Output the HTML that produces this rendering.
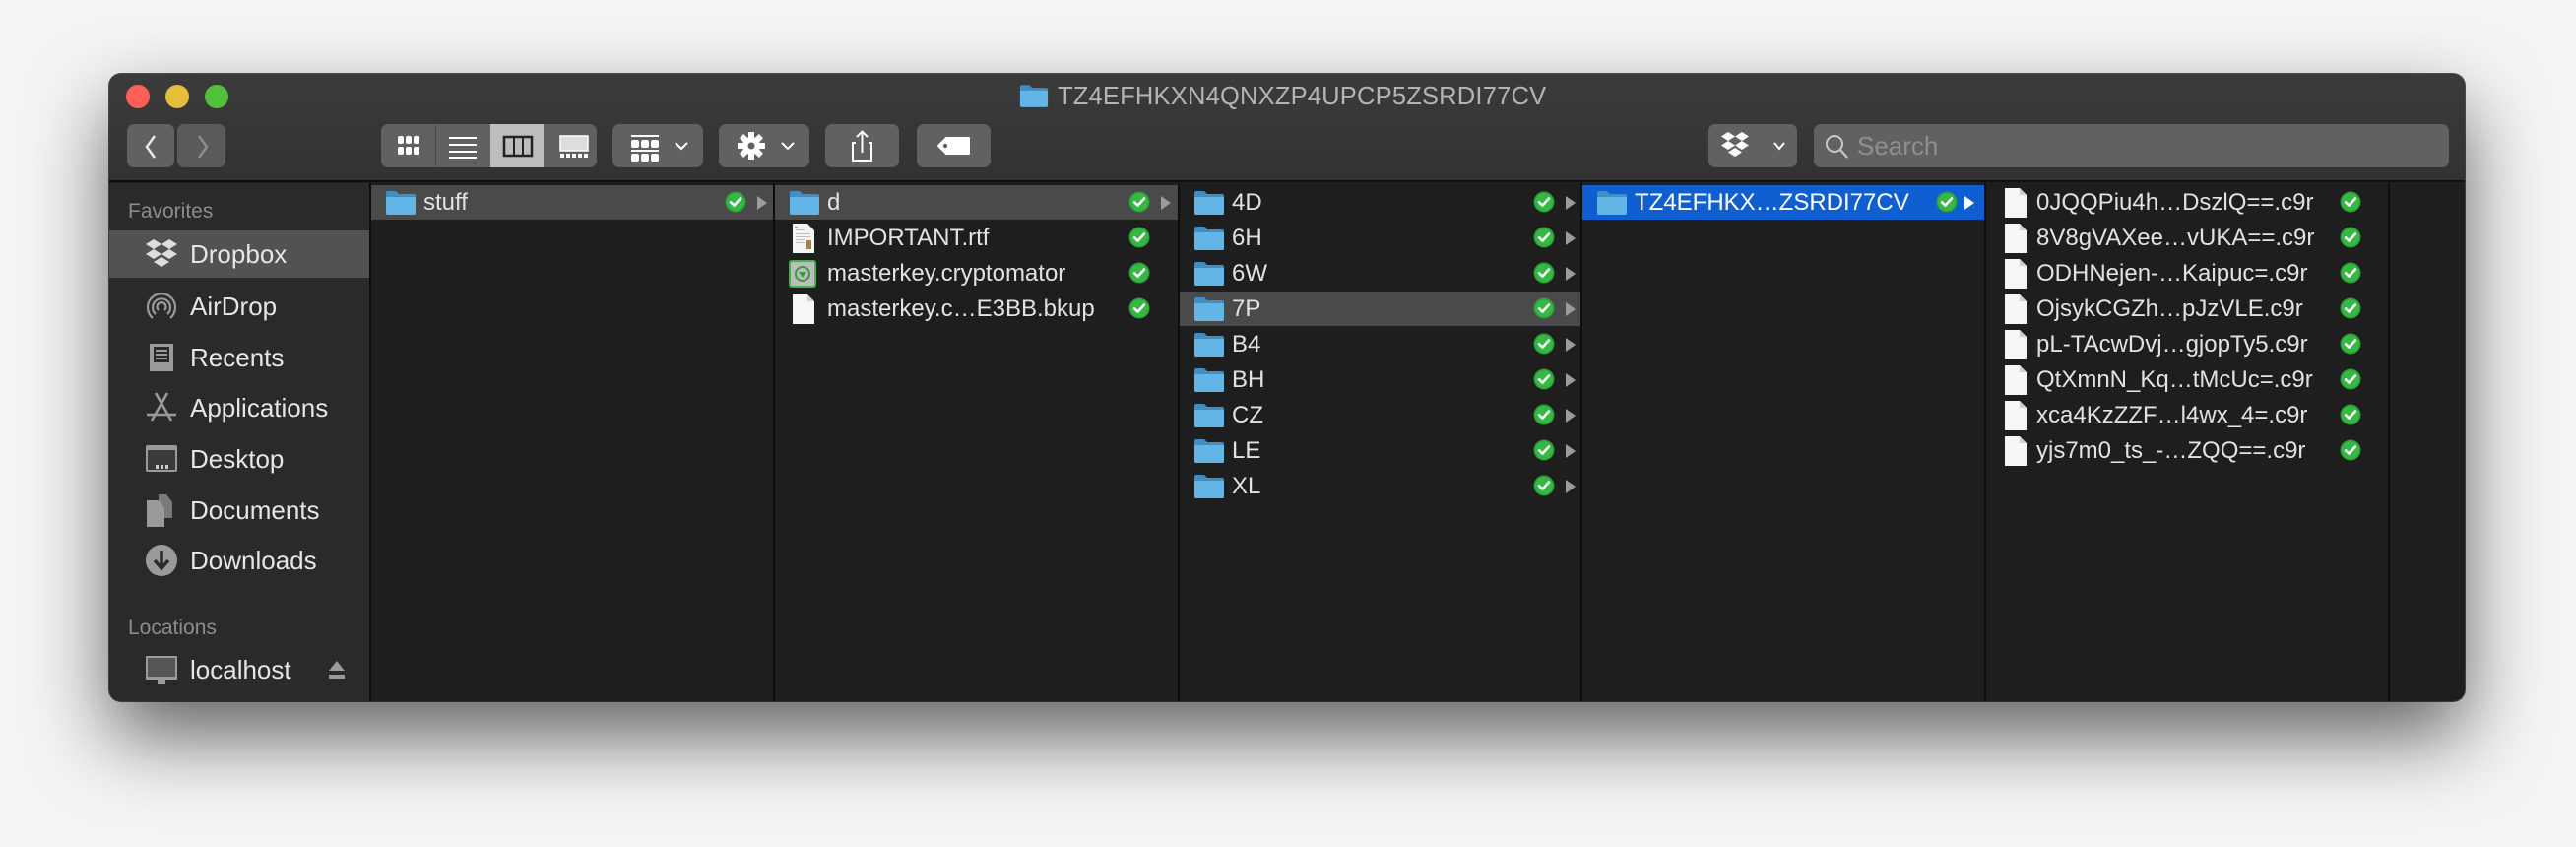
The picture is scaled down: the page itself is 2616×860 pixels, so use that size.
<!DOCTYPE html>
<html><head><meta charset="utf-8"><style>
*{margin:0;padding:0;box-sizing:border-box}
body{width:2616px;height:860px;background:#f4f4f4;position:relative;overflow:hidden;font-family:"Liberation Sans",sans-serif}
.a{position:absolute}
#win{left:111px;top:75px;width:2392px;height:637px;border-radius:12px;background:#1e1e1e;box-shadow:0 35px 80px rgba(0,0,0,.6),0 0 0 1px #555;overflow:hidden}
#tb{left:0;top:0;width:2392px;height:110px;background:linear-gradient(#3b3b3b,#323232);border-bottom:2px solid #111}
.tl{width:24px;height:24px;border-radius:50%;top:11px}
.btn{background:#616161;border-radius:7px;top:51px;height:44px}
#side{left:0;top:111px;width:266px;height:526px;background:#2a2a2a;border-right:2px solid #0d0d0d}
.sl{color:#8c8c8c;font-size:21px;left:19px}
.si{left:0;width:264px;height:48px;color:#e6e6e6;font-size:26px;line-height:48px}
.si span{position:absolute;left:82px}
.si svg{position:absolute;left:36px;top:7px}
.col{top:111px;height:526px;border-right:2px solid #0d0d0d}
.row{position:absolute;left:0;width:100%;height:35px;color:#e2e2e2;font-size:24px;line-height:35px}
.row .t{position:absolute;left:53px}
.row .ic{position:absolute;left:14px;top:5px}
.row .ck{position:absolute;left:359px;top:6px}
.row .ar{position:absolute;left:392px;top:11px}
.sel{background:#4a4a4a}
.blue{background:#0f5fd1;color:#fff}
</style></head><body>
<svg width="0" height="0" style="position:absolute">
<defs>
<symbol id="fold" viewBox="0 0 32 26"><path d="M1 3 Q1 1 3 1 H11 L14 4 H29 Q31 4 31 6 V24 Q31 25 29 25 H3 Q1 25 1 23Z" fill="#3f8fc4"/><path d="M1 7 H31 V23 Q31 25 29 25 H3 Q1 25 1 23Z" fill="#62b5e5"/></symbol>
<symbol id="chk" viewBox="0 0 20 20"><circle cx="10" cy="10" r="9.5" fill="#2aa338"/><circle cx="10" cy="10" r="8" fill="#35b944"/><path d="M5.5 10.3 L8.6 13.3 L14.5 6.8" stroke="#fff" stroke-width="2.3" fill="none" stroke-linecap="round" stroke-linejoin="round"/></symbol>
<symbol id="file" viewBox="0 0 24 30"><path d="M1 0 H16 L23 7 V30 H1Z" fill="#f6f6f6"/><path d="M16 0 V7 H23" fill="#cfcfcf"/></symbol>
</defs></svg>
<div id="win" class="a">
 <div id="tb" class="a">
  <div class="a tl" style="left:17px;background:#fe5f57"></div>
  <div class="a tl" style="left:57px;background:#e5bf3c"></div>
  <div class="a tl" style="left:97px;background:#52c03a"></div>
  <svg class="a" style="left:924px;top:10px" width="30" height="25"><use href="#fold"/></svg>
  <div class="a" style="left:963px;top:9px;font-size:25.5px;color:#b4b4b4;letter-spacing:.2px">TZ4EFHKXN4QNXZP4UPCP5ZSRDI77CV</div>
  <div class="a btn" style="left:18px;width:48px"></div>
  <div class="a btn" style="left:69px;width:49px;background:#5a5a5a"></div>
  <svg class="a" style="left:30px;top:60px" width="80" height="28"><path d="M16 3 L8 14 L16 25" stroke="#e8e8e8" stroke-width="2.5" fill="none"/><path d="M61 3 L69 14 L61 25" stroke="#8d8d8d" stroke-width="2.5" fill="none"/></svg>
  <div class="a btn" style="left:276px;width:219px"></div>
  <div class="a" style="left:331px;top:51px;width:1px;height:44px;background:#4a4a4a"></div>
  <div class="a" style="left:387px;top:51px;width:54px;height:44px;background:#bdbdbd"></div>
  <svg class="a" style="left:276px;top:51px" width="219" height="44">
   <g fill="#fff"><rect x="17" y="12" width="6" height="8" rx="2"/><rect x="25" y="12" width="6" height="8" rx="2"/><rect x="33" y="12" width="6" height="8" rx="2"/><rect x="17" y="23" width="6" height="8" rx="2"/><rect x="25" y="23" width="6" height="8" rx="2"/><rect x="33" y="23" width="6" height="8" rx="2"/>
   <rect x="69" y="13" width="28" height="2"/><rect x="69" y="20" width="28" height="2"/><rect x="69" y="27" width="28" height="2"/><rect x="69" y="33" width="28" height="2"/></g>
   <rect x="125" y="13" width="28" height="19" fill="none" stroke="#222" stroke-width="2.5"/><rect x="134" y="13" width="2" height="19" fill="#222"/><rect x="143" y="13" width="2" height="19" fill="#222"/>
   <rect x="182" y="12" width="28" height="15" fill="#ddd" stroke="#fff" stroke-width="1.5"/><g fill="#fff"><rect x="182" y="30" width="4" height="4"/><rect x="188" y="30" width="4" height="4"/><rect x="194" y="30" width="4" height="4"/><rect x="200" y="30" width="4" height="4"/><rect x="206" y="30" width="4" height="4"/></g>
  </svg>
  <div class="a btn" style="left:511px;width:92px"></div>
  <svg class="a" style="left:511px;top:51px" width="92" height="44"><g fill="#fff"><rect x="19" y="11" width="28" height="2"/><rect x="19" y="16" width="8" height="8" rx="2"/><rect x="29" y="16" width="8" height="8" rx="2"/><rect x="39" y="16" width="8" height="8" rx="2"/><rect x="19" y="26" width="28" height="2"/><rect x="19" y="30" width="8" height="8" rx="2"/><rect x="29" y="30" width="8" height="8" rx="2"/><rect x="39" y="30" width="8" height="8" rx="2"/></g><path d="M64 19 L70 25 L76 19" stroke="#fff" stroke-width="2" fill="none"/></svg>
  <div class="a btn" style="left:619px;width:92px"></div>
  <svg class="a" style="left:619px;top:51px" width="92" height="44"><g transform="translate(33,22)"><circle r="9" fill="#fff"/><g fill="#fff"><rect x="-3" y="-14" width="6" height="28"/><rect x="-3" y="-14" width="6" height="28" transform="rotate(45)"/><rect x="-3" y="-14" width="6" height="28" transform="rotate(90)"/><rect x="-3" y="-14" width="6" height="28" transform="rotate(135)"/></g><circle r="3.5" fill="#616161"/></g><path d="M64 19 L70 25 L76 19" stroke="#fff" stroke-width="2" fill="none"/></svg>
  <div class="a btn" style="left:727px;width:75px"></div>
  <svg class="a" style="left:727px;top:51px" width="75" height="44"><path d="M31 19 H28 V37 H47 V19 H44" stroke="#fff" stroke-width="2" fill="none"/><path d="M37.5 29 V8 M32 13 L37.5 7.5 L43 13" stroke="#fff" stroke-width="2" fill="none"/></svg>
  <div class="a btn" style="left:820px;width:75px"></div>
  <svg class="a" style="left:820px;top:51px" width="75" height="44"><path d="M22 22 L30 14 H53 V30 H30Z" fill="#fff" stroke="#fff" stroke-width="2" stroke-linejoin="round"/><circle cx="29" cy="22" r="2.2" fill="#616161"/></svg>
  <div class="a btn" style="left:1624px;width:90px"></div>
  <svg class="a" style="left:1624px;top:51px" width="90" height="44"><g fill="#fff" transform="translate(27,22)"><path d="M-7 -14 L0 -9.5 L-7 -5 L-14 -9.5Z"/><path d="M7 -14 L14 -9.5 L7 -5 L0 -9.5Z"/><path d="M-7 -5 L0 -0.5 L-7 4 L-14 -0.5Z"/><path d="M7 -5 L14 -0.5 L7 4 L0 -0.5Z"/><path d="M0 2 L7 6.5 L0 11 L-7 6.5Z"/></g><path d="M67 19 L72 25 L77 19" stroke="#fff" stroke-width="2" fill="none"/></svg>
  <div class="a btn" style="left:1731px;width:645px"></div>
  <svg class="a" style="left:1741px;top:60px" width="30" height="28"><circle cx="11" cy="11" r="8" stroke="#c8c8c8" stroke-width="2" fill="none"/><path d="M17 17 L24 25" stroke="#c8c8c8" stroke-width="2.2"/></svg>
  <div class="a" style="left:1775px;top:58px;font-size:26px;color:#8f8f8f">Search</div>
 </div>
 <div id="side" class="a">
  <div class="a sl" style="top:17px">Favorites</div>
  <div class="a si" style="top:48px;background:#525252"><svg width="34" height="34" viewBox="-17 -17 34 34"><g fill="#ddd"><path d="M-8 -15 L0 -10 L-8 -5 L-16 -10Z"/><path d="M8 -15 L16 -10 L8 -5 L0 -10Z"/><path d="M-8 -5 L0 0 L-8 5 L-16 0Z"/><path d="M8 -5 L16 0 L8 5 L0 0Z"/><path d="M0 3 L8 8 L0 13 L-8 8Z"/></g></svg><span>Dropbox</span></div>
  <div class="a si" style="top:101px"><svg width="34" height="34" viewBox="0 0 34 34" fill="none" stroke="#9a9a9a" stroke-width="2.2"><path d="M8 29 A14 14 0 1 1 26 29"/><path d="M11 25 A9 9 0 1 1 23 25"/><path d="M14 21 A4.5 4.5 0 1 1 20 21"/></svg><span>AirDrop</span></div>
  <div class="a si" style="top:153px"><svg width="34" height="34" viewBox="0 0 34 34"><path d="M5 3 H29 V31 H5Z" fill="#9a9a9a"/><path d="M9 6 H25 V22 H9Z" fill="#2a2a2a"/><g fill="#9a9a9a"><rect x="11" y="9" width="12" height="2"/><rect x="11" y="13" width="12" height="2"/><rect x="11" y="17" width="12" height="2"/></g></svg><span>Recents</span></div>
  <div class="a si" style="top:204px"><svg width="34" height="34" viewBox="0 0 34 34" stroke="#9a9a9a" stroke-width="2.6" fill="none"><path d="M11 2 L27 30 M23 2 L7 30 M2 24 H32"/></svg><span>Applications</span></div>
  <div class="a si" style="top:256px"><svg width="34" height="34" viewBox="0 0 34 34"><rect x="1" y="3" width="32" height="27" rx="2" fill="#9a9a9a"/><rect x="3" y="8" width="28" height="20" fill="#3a3a3a"/><g fill="#ccc"><rect x="11" y="23" width="3" height="4"/><rect x="16" y="23" width="3" height="4"/><rect x="21" y="23" width="3" height="4"/></g></svg><span>Desktop</span></div>
  <div class="a si" style="top:308px"><svg width="34" height="34" viewBox="0 0 34 34"><path d="M14 1 H22 L28 9 V25 H14Z" fill="#7a7a7a"/><path d="M2 7 H14 L20 15 V34 H2Z" fill="#9a9a9a"/></svg><span>Documents</span></div>
  <div class="a si" style="top:359px"><svg width="34" height="34" viewBox="0 0 34 34"><circle cx="17" cy="17" r="16" fill="#9a9a9a"/><path d="M17 7 V23 M10 17 L17 25 L24 17" stroke="#2a2a2a" stroke-width="3.5" fill="none"/></svg><span>Downloads</span></div>
  <div class="a sl" style="top:440px">Locations</div>
  <div class="a si" style="top:470px"><svg width="34" height="34" viewBox="0 0 34 34"><rect x="1" y="3" width="32" height="24" rx="1" fill="#9a9a9a"/><rect x="3" y="5" width="28" height="19" fill="#555"/><rect x="13" y="27" width="8" height="4" fill="#9a9a9a"/></svg><span>localhost</span><svg style="left:222px;top:14px" width="18" height="20" viewBox="0 0 18 20"><path d="M9 1 L17 11 H1Z" fill="#9a9a9a"/><rect x="1" y="15" width="16" height="4" fill="#9a9a9a"/></svg></div>
 </div>

 <div class="a col" style="left:266px;width:410px">
  <div class="row sel" style="top:2px"><svg class="ic" width="32" height="26"><use href="#fold"/></svg><span class="t">stuff</span><svg class="ck" width="22" height="22"><use href="#chk"/></svg><svg class="ar" width="10" height="14"><path d="M0 0 L10 7 L0 14Z" fill="#9c9c9c"/></svg></div>
 </div>
 <div class="a col" style="left:676px;width:411px">
  <div class="row sel" style="top:2px"><svg class="ic" width="32" height="26"><use href="#fold"/></svg><span class="t">d</span><svg class="ck" width="22" height="22"><use href="#chk"/></svg><svg class="ar" width="10" height="14"><path d="M0 0 L10 7 L0 14Z" fill="#9c9c9c"/></svg></div>
  <div class="row" style="top:38px"><svg class="ic" style="left:17px;top:3px" width="24" height="30"><path d="M1 0 H16 L23 7 V30 H1Z" fill="#f4f4f4"/><g fill="#bbb"><rect x="4" y="6" width="9" height="1"/><rect x="4" y="10" width="15" height="1"/><rect x="4" y="13" width="15" height="1"/><rect x="4" y="16" width="10" height="1"/><rect x="4" y="19" width="10" height="1"/></g><rect x="15" y="17" width="5" height="9" fill="#b07a40"/><rect x="3" y="3" width="3" height="2" fill="#e08040"/></svg><span class="t">IMPORTANT.rtf</span><svg class="ck" width="22" height="22"><use href="#chk"/></svg></div>
  <div class="row" style="top:74px"><svg class="ic" style="left:14px;top:4px" width="28" height="28"><rect x="1" y="1" width="26" height="26" rx="2" fill="#bcbcbc" stroke="#3eb54a" stroke-width="2"/><circle cx="14" cy="14" r="7" fill="none" stroke="#3a9a3e" stroke-width="2"/><path d="M10 12 H18 L14 18Z" fill="#3a9a3e"/></svg><span class="t">masterkey.cryptomator</span><svg class="ck" width="22" height="22"><use href="#chk"/></svg></div>
  <div class="row" style="top:110px"><svg class="ic" style="left:17px;top:3px" width="24" height="30"><use href="#file"/></svg><span class="t">masterkey.c…E3BB.bkup</span><svg class="ck" width="22" height="22"><use href="#chk"/></svg></div>
 </div>
 <div class="a col" style="left:1087px;width:409px">
  <div class="row" style="top:2px"><svg class="ic" width="32" height="26"><use href="#fold"/></svg><span class="t">4D</span><svg class="ck" width="22" height="22"><use href="#chk"/></svg><svg class="ar" width="10" height="14"><path d="M0 0 L10 7 L0 14Z" fill="#9c9c9c"/></svg></div>
  <div class="row" style="top:38px"><svg class="ic" width="32" height="26"><use href="#fold"/></svg><span class="t">6H</span><svg class="ck" width="22" height="22"><use href="#chk"/></svg><svg class="ar" width="10" height="14"><path d="M0 0 L10 7 L0 14Z" fill="#9c9c9c"/></svg></div>
  <div class="row" style="top:74px"><svg class="ic" width="32" height="26"><use href="#fold"/></svg><span class="t">6W</span><svg class="ck" width="22" height="22"><use href="#chk"/></svg><svg class="ar" width="10" height="14"><path d="M0 0 L10 7 L0 14Z" fill="#9c9c9c"/></svg></div>
  <div class="row sel" style="top:110px"><svg class="ic" width="32" height="26"><use href="#fold"/></svg><span class="t">7P</span><svg class="ck" width="22" height="22"><use href="#chk"/></svg><svg class="ar" width="10" height="14"><path d="M0 0 L10 7 L0 14Z" fill="#9c9c9c"/></svg></div>
  <div class="row" style="top:146px"><svg class="ic" width="32" height="26"><use href="#fold"/></svg><span class="t">B4</span><svg class="ck" width="22" height="22"><use href="#chk"/></svg><svg class="ar" width="10" height="14"><path d="M0 0 L10 7 L0 14Z" fill="#9c9c9c"/></svg></div>
  <div class="row" style="top:182px"><svg class="ic" width="32" height="26"><use href="#fold"/></svg><span class="t">BH</span><svg class="ck" width="22" height="22"><use href="#chk"/></svg><svg class="ar" width="10" height="14"><path d="M0 0 L10 7 L0 14Z" fill="#9c9c9c"/></svg></div>
  <div class="row" style="top:218px"><svg class="ic" width="32" height="26"><use href="#fold"/></svg><span class="t">CZ</span><svg class="ck" width="22" height="22"><use href="#chk"/></svg><svg class="ar" width="10" height="14"><path d="M0 0 L10 7 L0 14Z" fill="#9c9c9c"/></svg></div>
  <div class="row" style="top:254px"><svg class="ic" width="32" height="26"><use href="#fold"/></svg><span class="t">LE</span><svg class="ck" width="22" height="22"><use href="#chk"/></svg><svg class="ar" width="10" height="14"><path d="M0 0 L10 7 L0 14Z" fill="#9c9c9c"/></svg></div>
  <div class="row" style="top:290px"><svg class="ic" width="32" height="26"><use href="#fold"/></svg><span class="t">XL</span><svg class="ck" width="22" height="22"><use href="#chk"/></svg><svg class="ar" width="10" height="14"><path d="M0 0 L10 7 L0 14Z" fill="#9c9c9c"/></svg></div>
 </div>
 <div class="a col" style="left:1496px;width:410px">
  <div class="row blue" style="top:2px"><svg class="ic" width="32" height="26"><use href="#fold"/></svg><span class="t" style="left:53px">TZ4EFHKX…ZSRDI77CV</span><svg class="ck" width="22" height="22"><use href="#chk"/></svg><svg class="ar" style="left:388px" width="10" height="14"><path d="M0 0 L10 7 L0 14Z" fill="#fff"/></svg></div>
 </div>
 <div class="a col" style="left:1906px;width:410px">
  <div class="row" style="top:2px"><svg class="ic" style="left:18px;top:3px" width="24" height="30"><use href="#file"/></svg><span class="t" style="left:51px">0JQQPiu4h…DszlQ==.c9r</span><svg class="ck" width="22" height="22"><use href="#chk"/></svg></div>
  <div class="row" style="top:38px"><svg class="ic" style="left:18px;top:3px" width="24" height="30"><use href="#file"/></svg><span class="t" style="left:51px">8V8gVAXee…vUKA==.c9r</span><svg class="ck" width="22" height="22"><use href="#chk"/></svg></div>
  <div class="row" style="top:74px"><svg class="ic" style="left:18px;top:3px" width="24" height="30"><use href="#file"/></svg><span class="t" style="left:51px">ODHNejen-…Kaipuc=.c9r</span><svg class="ck" width="22" height="22"><use href="#chk"/></svg></div>
  <div class="row" style="top:110px"><svg class="ic" style="left:18px;top:3px" width="24" height="30"><use href="#file"/></svg><span class="t" style="left:51px">OjsykCGZh…pJzVLE.c9r</span><svg class="ck" width="22" height="22"><use href="#chk"/></svg></div>
  <div class="row" style="top:146px"><svg class="ic" style="left:18px;top:3px" width="24" height="30"><use href="#file"/></svg><span class="t" style="left:51px">pL-TAcwDvj…gjopTy5.c9r</span><svg class="ck" width="22" height="22"><use href="#chk"/></svg></div>
  <div class="row" style="top:182px"><svg class="ic" style="left:18px;top:3px" width="24" height="30"><use href="#file"/></svg><span class="t" style="left:51px">QtXmnN_Kq…tMcUc=.c9r</span><svg class="ck" width="22" height="22"><use href="#chk"/></svg></div>
  <div class="row" style="top:218px"><svg class="ic" style="left:18px;top:3px" width="24" height="30"><use href="#file"/></svg><span class="t" style="left:51px">xca4KzZZF…l4wx_4=.c9r</span><svg class="ck" width="22" height="22"><use href="#chk"/></svg></div>
  <div class="row" style="top:254px"><svg class="ic" style="left:18px;top:3px" width="24" height="30"><use href="#file"/></svg><span class="t" style="left:51px">yjs7m0_ts_-…ZQQ==.c9r</span><svg class="ck" width="22" height="22"><use href="#chk"/></svg></div>
 </div>
</div>
</body></html>
